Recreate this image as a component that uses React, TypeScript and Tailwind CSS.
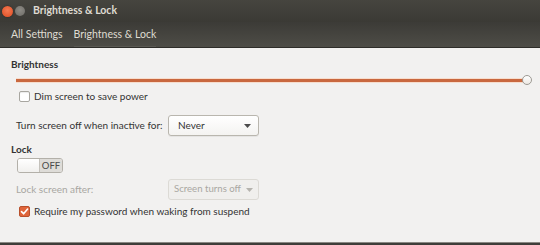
import React from 'react';

function Checkbox({ checked }: { checked?: boolean }) {
  if (checked) {
    return (
      <div className="w-[11px] h-[11px] rounded-[2px] bg-[#e0653a] border border-[#b8502c] flex items-center justify-center">
        <svg width="9" height="9" viewBox="0 0 9 9">
          <path d="M1.5 4.6 L3.6 6.8 L7.6 2" stroke="#fff" strokeWidth="1.6" fill="none" strokeLinecap="round" strokeLinejoin="round" />
        </svg>
      </div>
    );
  }
  return <div className="w-[11px] h-[11px] rounded-[2px] bg-white border border-[#a8a6a0] shadow-[inset_0_1px_1px_rgba(0,0,0,0.08)]" />;
}

function Combo({ label, disabled }: { label: string; disabled?: boolean }) {
  return (
    <div
      className={`w-[91px] h-[21px] rounded-[3px] border flex items-center justify-between whitespace-nowrap ${
        disabled
          ? 'border-[#dcdad5] bg-[#f0efed] text-[#a9a7a2] pl-[5px] pr-[5px] text-[9.6px]'
          : 'border-[#b9b6ae] bg-gradient-to-b from-white to-[#f4f3f1] text-[#333] pl-[9px] pr-[7px] shadow-[0_1px_0_rgba(0,0,0,0.05)]'
      }`}
    >
      <span>{label}</span>
      <svg width="7" height="4" viewBox="0 0 7 4">
        <path d="M0 0 L7 0 L3.5 4 Z" fill={disabled ? '#b5b3ae' : '#4c4c4c'} />
      </svg>
    </div>
  );
}

export default function App() {
  return (
    <div
      className="w-[540px] h-[245px] flex flex-col overflow-hidden bg-[#f2f1f0] text-[10px] text-[#333] whitespace-nowrap"
      style={{ fontFamily: 'Lato, "Noto Sans", sans-serif' }}
    >
      {/* title bar */}
      <div className="h-[22px] shrink-0 flex items-center bg-gradient-to-b from-[#46453f] to-[#3b3a35]">
        <div className="flex items-center gap-[2px] pl-[2px]">
          <div className="w-[11px] h-[11px] rounded-full bg-[radial-gradient(circle_at_50%_40%,#f47a53,#df4b20)] shadow-[0_0_2px_rgba(0,0,0,0.4)]" />
          <div className="w-[10px] h-[10px] rounded-full bg-[radial-gradient(circle_at_50%_40%,#8e8c86,#6d6b66)]" />
        </div>
        <span className="ml-[8px] font-bold text-[10.5px] text-[#dfdbd2]">Brightness &amp; Lock</span>
      </div>

      {/* toolbar */}
      <div className="h-[26px] shrink-0 flex items-end bg-gradient-to-b from-[#3c3b37] to-[#4e4d47] text-[#dfdbd2] text-[10.5px] border-b border-[#2e2d29]">
        <div className="flex items-stretch h-full pl-[11px] gap-[11px]">
          <span className="flex items-center">All Settings</span>
          <span className="flex items-center border-b border-[#5a5953] pt-[1px]">Brightness &amp; Lock</span>
        </div>
      </div>

      {/* content */}
      <div className="flex-1 flex flex-col pl-[11px] pr-[8px] pt-[9px]">
        <div className="font-bold leading-[14px]">Brightness</div>

        <div className="mt-[4px] ml-[5px] h-[10px] flex items-center">
          <div className="flex-1 h-[5px] flex flex-col">
            <div className="h-[1px] bg-[#f7ddcd]" />
            <div className="h-[3px] bg-[#c9683f]" />
            <div className="h-[1px] bg-[#f7ddcd]" />
          </div>
          <div className="w-[10px] h-[10px] -ml-[2px] rounded-full bg-gradient-to-b from-white to-[#ece9e4] border border-[#9d9a94]" />
        </div>

        <div className="mt-[4px] ml-[8px] h-[14px] flex items-center gap-[4px]">
          <Checkbox />
          <span>Dim screen to save power</span>
        </div>

        <div className="mt-[12px] ml-[5px] flex items-center">
          <span className="w-[152px]">Turn screen off when inactive for:</span>
          <Combo label="Never" />
        </div>

        <div className="mt-[6px] font-bold leading-[14px]">Lock</div>

        <div className="mt-[2px] ml-[6px] w-[46px] h-[15px] rounded-[3px] border border-[#b3b0a9] flex overflow-hidden">
          <div className="w-[22px] bg-gradient-to-b from-white to-[#f1f0ee] border-r border-[#c4c1bb]" />
          <div className="flex-1 bg-[#dedcd8] flex items-center justify-center text-[9.5px] text-[#4a4a4a] leading-none">OFF</div>
        </div>

        <div className="mt-[6px] ml-[5px] flex items-center">
          <span className="w-[152px] text-[#a9a7a2]">Lock screen after:</span>
          <Combo label="Screen turns off" disabled />
        </div>

        <div className="mt-[4px] ml-[8px] h-[14px] flex items-center gap-[4px]">
          <Checkbox checked />
          <span>Require my password when waking from suspend</span>
        </div>
      </div>

      <div className="h-[3px] shrink-0 bg-[#3e3d39] border-t border-[#8a8883]" />
    </div>
  );
}
